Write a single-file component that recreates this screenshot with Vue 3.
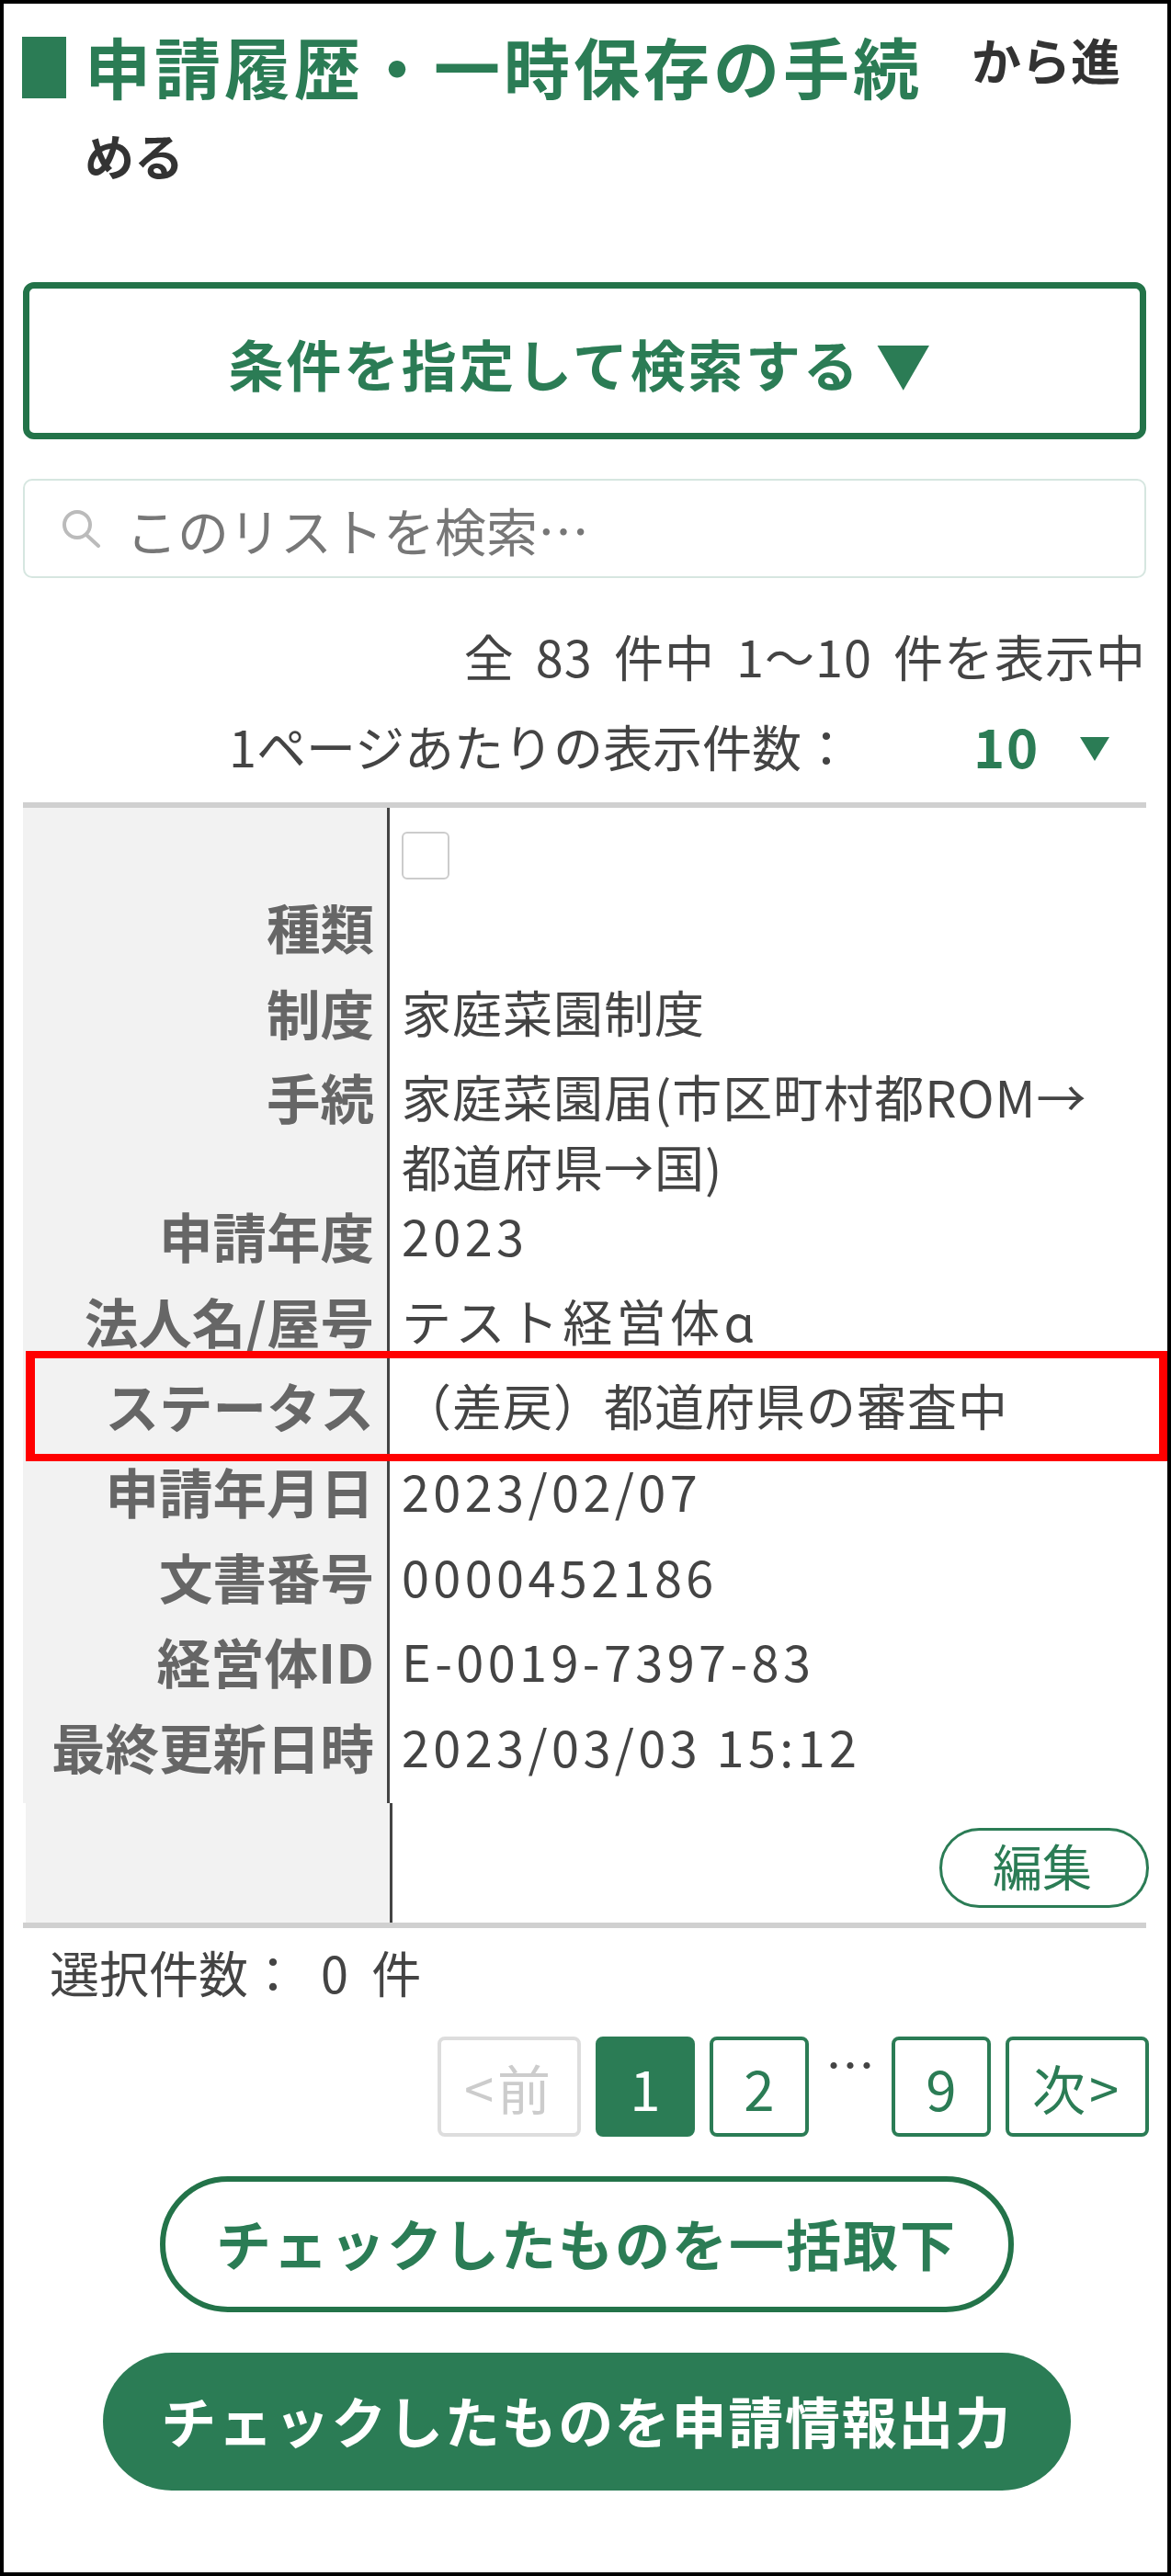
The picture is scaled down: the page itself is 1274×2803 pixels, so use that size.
<script setup>
const rows = [
  { label: '種類', value: '' },
  { label: '制度', value: '家庭菜園制度' },
  { label: '手続', value: '家庭菜園届(市区町村都ROM→\n都道府県→国)', tall: true },
  { label: '申請年度', value: '2023', wide: true },
  { label: '法人名/屋号', value: 'テスト経営体ɑ', wide: true },
  { label: 'ステータス', value: '（差戻）都道府県の審査中', marked: true },
  { label: '申請年月日', value: '2023/02/07', wide: true },
  { label: '文書番号', value: '0000452186', wide: true },
  { label: '経営体ID', value: 'E-0019-7397-83', wide: true },
  { label: '最終更新日時', value: '2023/03/03 15:12', wide: true, end: true },
]
</script>

<template>
  <div class="page">
    <h2 class="title"><span class="bar"></span><span class="big">申請履歴・一時保存の手続</span><span class="rest">から進める</span></h2>

    <button class="cond">条件を指定して検索する ▼</button>

    <div class="search">
      <svg class="glass" viewBox="0 0 43 42" width="43" height="42" fill="none" stroke="#bbb" stroke-width="4">
        <circle cx="17" cy="17" r="14" />
        <path d="M27 28l13 12" stroke-linecap="round" />
      </svg>
      <span>このリストを検索…</span>
    </div>

    <div class="count">全 83 件中 1～10 件を表示中</div>
    <div class="perpage">
      <span>1ページあたりの表示件数：</span>
      <b class="num">10</b>
      <svg viewBox="0 0 32 26" width="32" height="26" class="caret"><path d="M0 0h32L16 26z" fill="#2b7c55" /></svg>
    </div>

    <div class="table">
      <div class="rowbox check">
        <div class="th"></div>
        <div class="td"><span class="box"></span></div>
      </div>
      <div v-for="r in rows" :key="r.label" class="rowbox" :class="{ tall: r.tall, marked: r.marked, end: r.end }">
        <div class="th">{{ r.label }}</div>
        <div class="td" :class="{ wide: r.wide }">{{ r.value }}</div>
        <div v-if="r.marked" class="redbox"></div>
      </div>
      <div class="rowbox last">
        <div class="th"></div>
        <div class="td"><button class="edit">編集</button></div>
      </div>
    </div>

    <div class="selected">選択件数： 0 件</div>

    <nav class="pager">
      <span class="pg wide off">&lt;前</span>
      <span class="pg on">1</span>
      <span class="pg">2</span>
      <span class="dots">…</span>
      <span class="pg">9</span>
      <span class="pg wide">次&gt;</span>
    </nav>

    <div class="actions">
      <button class="pill outline">チェックしたものを一括取下</button>
      <button class="pill solid">チェックしたものを申請情報出力</button>
    </div>
  </div>
</template>

<style>
body { margin: 0; background: #fff; }
</style>

<style scoped>
.page {
  box-sizing: border-box;
  width: 1274px;
  height: 2803px;
  border: 4px solid #000;
  padding: 0 23px 0 21px;
  background: #fff;
  color: #444;
  font-family: "Noto Sans CJK JP", "Noto Sans", sans-serif;
  font-size: 54px;
  overflow: hidden;
}
.title {
  position: relative;
  margin: 0;
  padding: 15px 0 0 67px;
  font-size: 54px;
  line-height: 104px;
  height: 303px;
  box-sizing: border-box;
  font-weight: 700;
  color: #333;
}
.bar {
  position: absolute;
  left: -1px;
  top: 36px;
  width: 48px;
  height: 67px;
  background: #2b7c55;
}
.big {
  font-size: 72px;
  letter-spacing: 4px;
  color: #2b7c55;
  margin-right: 53px;
}
.rest {
  line-height: 60px;
  vertical-align: 14px;
}
.cond {
  display: block;
  box-sizing: border-box;
  width: 100%;
  height: 171px;
  border: 7px solid #237349;
  border-radius: 12px;
  background: #fff;
  color: #2b7c55;
  font: 700 60px "Noto Sans CJK JP", sans-serif;
  letter-spacing: 2.7px;
  padding: 4px 8px 0 0;
}
.search {
  box-sizing: border-box;
  display: flex;
  align-items: center;
  height: 108px;
  margin-top: 43px;
  border: 2px solid #d6e6e0;
  border-radius: 10px;
  padding-left: 40px;
  color: #777;
  font-size: 56px;
}
.glass { margin-right: 27px; flex: none; }
.count {
  margin-top: 55px;
  text-align: right;
  line-height: 60px;
  color: #444;
  font-size: 54px;
  letter-spacing: 1px;
  word-spacing: 10px;
  white-space: pre;
}
.perpage {
  display: flex;
  align-items: center;
  margin-top: 37px;
  padding-left: 224px;
  height: 60px;
  font-size: 54px;
}
.num {
  margin-left: 133px;
  color: #2b7c55;
  font-size: 58px;
  letter-spacing: 2px;
}
.caret { margin: 8px 0 0 44px; }
.table {
  margin-top: 32px;
  border-top: 6px solid #d0d0d0;
  border-bottom: 6px solid #d0d0d0;
}
.rowbox {
  display: grid;
  grid-template-columns: 399px 1fr;
  height: 92.6px;
  position: relative;
}
.rowbox.check { height: 83px; }
.rowbox.tall { height: 151px; }
.rowbox.end { height: 108.6px; }
.rowbox.last { height: 130px; margin: 0 -3px 0 3px; }
.rowbox.marked { z-index: 2; }
.th {
  background: #f2f2f2;
  border-right: 3px solid #444;
  padding: 8px 14px 0 0;
  text-align: right;
  font-weight: 700;
  font-size: 58.5px;
  line-height: 76px;
  color: #666;
  white-space: nowrap;
}
.td {
  padding: 8px 0 0 13px;
  line-height: 76px;
  letter-spacing: 1px;
  color: #444;
  white-space: pre-line;
}
.td.wide { letter-spacing: 4.4px; }
.box {
  display: block;
  box-sizing: border-box;
  width: 52px;
  height: 52px;
  margin-top: 18px;
  border: 2px solid #ccc;
  border-radius: 6px;
}
.check .td { padding-top: 8px; }
.last .td { display: flex; justify-content: flex-end; align-items: flex-start; padding: 27px 0 0; }
.edit {
  box-sizing: border-box;
  width: 228px;
  height: 87px;
  border: 3px solid #2b7c55;
  border-radius: 44px;
  background: #fff;
  color: #2b7c55;
  font: 400 54px/1 "Noto Sans CJK JP", sans-serif;
  padding: 0 4px 6px 0;
}
.redbox {
  position: absolute;
  left: 3px;
  top: -13px;
  bottom: -14px;
  width: 1243px;
  box-sizing: border-box;
  border: solid #f00;
  border-width: 8px 10px;
  pointer-events: none;
}
.selected {
  margin-top: 18px;
  padding-left: 29px;
  line-height: 60px;
  font-size: 54px;
  word-spacing: 13px;
}
.pager {
  display: flex;
  justify-content: flex-end;
  align-items: center;
  margin: 40px -3px 0 0;
  gap: 16px;
}
.pg {
  box-sizing: border-box;
  width: 108px;
  height: 109px;
  display: flex;
  align-items: center;
  justify-content: center;
  border: 4px solid #2b7c55;
  border-radius: 8px;
  color: #2b7c55;
  font-size: 60px;
}
.pg.wide { width: 156px; font-size: 58px; letter-spacing: 4px; }
.pg.off { border-color: #ddd; color: #ccc; }
.pg.on { background: #2b7c55; color: #fff; }
.dots { width: 90px; text-align: center; margin: 0 -16px; color: #444; line-height: 58px; align-self: flex-start; }
.actions {
  display: flex;
  flex-direction: column;
  align-items: center;
  margin: 43px 0 0 4px;
  gap: 44px;
}
.pill {
  box-sizing: border-box;
  border-radius: 80px;
  font: 700 60px "Noto Sans CJK JP", sans-serif;
  padding: 0 0 6px;
}
.outline {
  width: 929px;
  height: 148px;
  border: 6px solid #237349;
  background: #fff;
  color: #2b7c55;
  letter-spacing: 2px;
}
.solid {
  width: 1053px;
  height: 150px;
  border: 0;
  background: #2b7c55;
  color: #fff;
  letter-spacing: 1.7px;
}
</style>
